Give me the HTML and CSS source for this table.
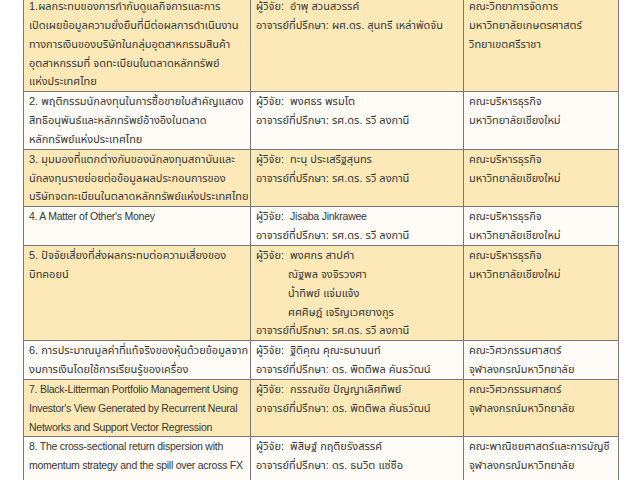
FILE: index.html
```html
<!DOCTYPE html>
<html lang="th">
<head>
<meta charset="utf-8">
<title>งานวิจัย</title>
<link rel="stylesheet" href="styles.css">
</head>
<body>
<table class="research">
  <colgroup>
    <col class="c-title">
    <col class="c-people">
    <col class="c-faculty">
  </colgroup>
  <tbody>
    <tr class="hl">
      <td>1.ผลกระทบของการกำกับดูแลกิจการและการ<br>เปิดเผยข้อมูลความยั่งยืนที่มีต่อผลการดำเนินงาน<br>ทางการเงินของบริษัทในกลุ่มอุตสาหกรรมสินค้า<br>อุตสาหกรรมที่ จดทะเบียนในตลาดหลักทรัพย์<br>แห่งประเทศไทย</td>
      <td>ผู้วิจัย:&nbsp; อำพุ สวนสวรรค์<br>อาจารย์ที่ปรึกษา: ผศ.ดร. สุนทรี เหล่าพัดจัน</td>
      <td>คณะวิทยาการจัดการ<br>มหาวิทยาลัยเกษตรศาสตร์<br>วิทยาเขตศรีราชา</td>
    </tr>
    <tr>
      <td>2. พฤติกรรมนักลงทุนในการซื้อขายใบสำคัญแสดง<br>สิทธิอนุพันธ์และหลักทรัพย์อ้างอิงในตลาด<br>หลักทรัพย์แห่งประเทศไทย</td>
      <td>ผู้วิจัย:&nbsp; พงศธร พรมโต<br>อาจารย์ที่ปรึกษา: รศ.ดร. รวี ลงกานี</td>
      <td>คณะบริหารธุรกิจ<br>มหาวิทยาลัยเชียงใหม่</td>
    </tr>
    <tr class="hl">
      <td>3. มุมมองที่แตกต่างกันของนักลงทุนสถาบันและ<br>นักลงทุนรายย่อยต่อข้อมูลผลประกอบการของ<br>บริษัทจดทะเบียนในตลาดหลักทรัพย์แห่งประเทศไทย</td>
      <td>ผู้วิจัย:&nbsp; ทะนุ ประเสริฐสุนทร<br>อาจารย์ที่ปรึกษา: รศ.ดร. รวี ลงกานี</td>
      <td>คณะบริหารธุรกิจ<br>มหาวิทยาลัยเชียงใหม่</td>
    </tr>
    <tr>
      <td class="en">4. A Matter of Other's Money</td>
      <td>ผู้วิจัย:&nbsp; <span class="en">Jisaba Jinkrawee</span><br>อาจารย์ที่ปรึกษา: รศ.ดร. รวี ลงกานี</td>
      <td>คณะบริหารธุรกิจ<br>มหาวิทยาลัยเชียงใหม่</td>
    </tr>
    <tr class="hl">
      <td>5. ปัจจัยเสี่ยงที่ส่งผลกระทบต่อความเสี่ยงของ<br>บิทคอยน์</td>
      <td>ผู้วิจัย:&nbsp; พงศกร สาปคำ<br><span class="indent">ณัฐพล จงจิรวงศา</span><br><span class="indent">น้ำทิพย์ แจ่มแจ้ง</span><br><span class="indent">ศศศิษฎ์ เจริญเวศยางกูร</span><br>อาจารย์ที่ปรึกษา: รศ.ดร. รวี ลงกานี</td>
      <td>คณะบริหารธุรกิจ<br>มหาวิทยาลัยเชียงใหม่</td>
    </tr>
    <tr>
      <td>6. การประมาณมูลค่าที่แท้จริงของหุ้นด้วยข้อมูลจาก<br>งบการเงินโดยใช้การเรียนรู้ของเครื่อง</td>
      <td>ผู้วิจัย:&nbsp; ฐิติคุณ คุณะธนานนท์<br>อาจารย์ที่ปรึกษา: ดร. พิตติพล คันธวัฒน์</td>
      <td>คณะวิศวกรรมศาสตร์<br>จุฬาลงกรณ์มหาวิทยาลัย</td>
    </tr>
    <tr class="hl">
      <td class="en">7. Black-Litterman Portfolio Management Using<br>Investor's View Generated by Recurrent Neural<br>Networks and Support Vector Regression</td>
      <td>ผู้วิจัย:&nbsp; กรรณชัย ปัญญาเลิศทิพย์<br>อาจารย์ที่ปรึกษา: ดร. พิตติพล คันธวัฒน์</td>
      <td>คณะวิศวกรรมศาสตร์<br>จุฬาลงกรณ์มหาวิทยาลัย</td>
    </tr>
    <tr>
      <td class="en">8. The cross-sectional return dispersion with<br>momentum strategy and the spill over across FX<br>and Equity markets during COVID19</td>
      <td>ผู้วิจัย:&nbsp; พิสิษฐ์ กฤติยรังสรรค์<br>อาจารย์ที่ปรึกษา: ดร. ธนวิต แซ่ซือ</td>
      <td>คณะพาณิชยศาสตร์และการบัญชี<br>จุฬาลงกรณ์มหาวิทยาลัย</td>
    </tr>
  </tbody>
</table>
</body>
</html>
```

FILE: styles.css
```css
html, body {
  margin: 0;
  padding: 0;
  background: #ffffff;
}

body {
  padding-left: 23px;
  overflow: hidden;
}

.research {
  margin-top: -4px;
  width: 595px;
  table-layout: fixed;
  border-collapse: collapse;
  font-family: "Liberation Sans", "Noto Sans Thai", "Noto Sans", "DejaVu Sans", sans-serif;
  font-size: 11px;
  line-height: 18.85px;
  color: #363636;
}

.c-title { width: 227px; }
.c-people { width: 213px; }
.c-faculty { width: 155px; }

.research td {
  border: 1px solid #777777;
  padding: 0 3px 0 5px;
  vertical-align: top;
  white-space: nowrap;
  overflow: hidden;
  background: #fffbf6;
}

.research tr.hl td {
  background: #fde9b7;
}

.research .en {
  font-size: 10.5px;
  letter-spacing: -0.25px;
}

.indent {
  padding-left: 32px;
}
```
